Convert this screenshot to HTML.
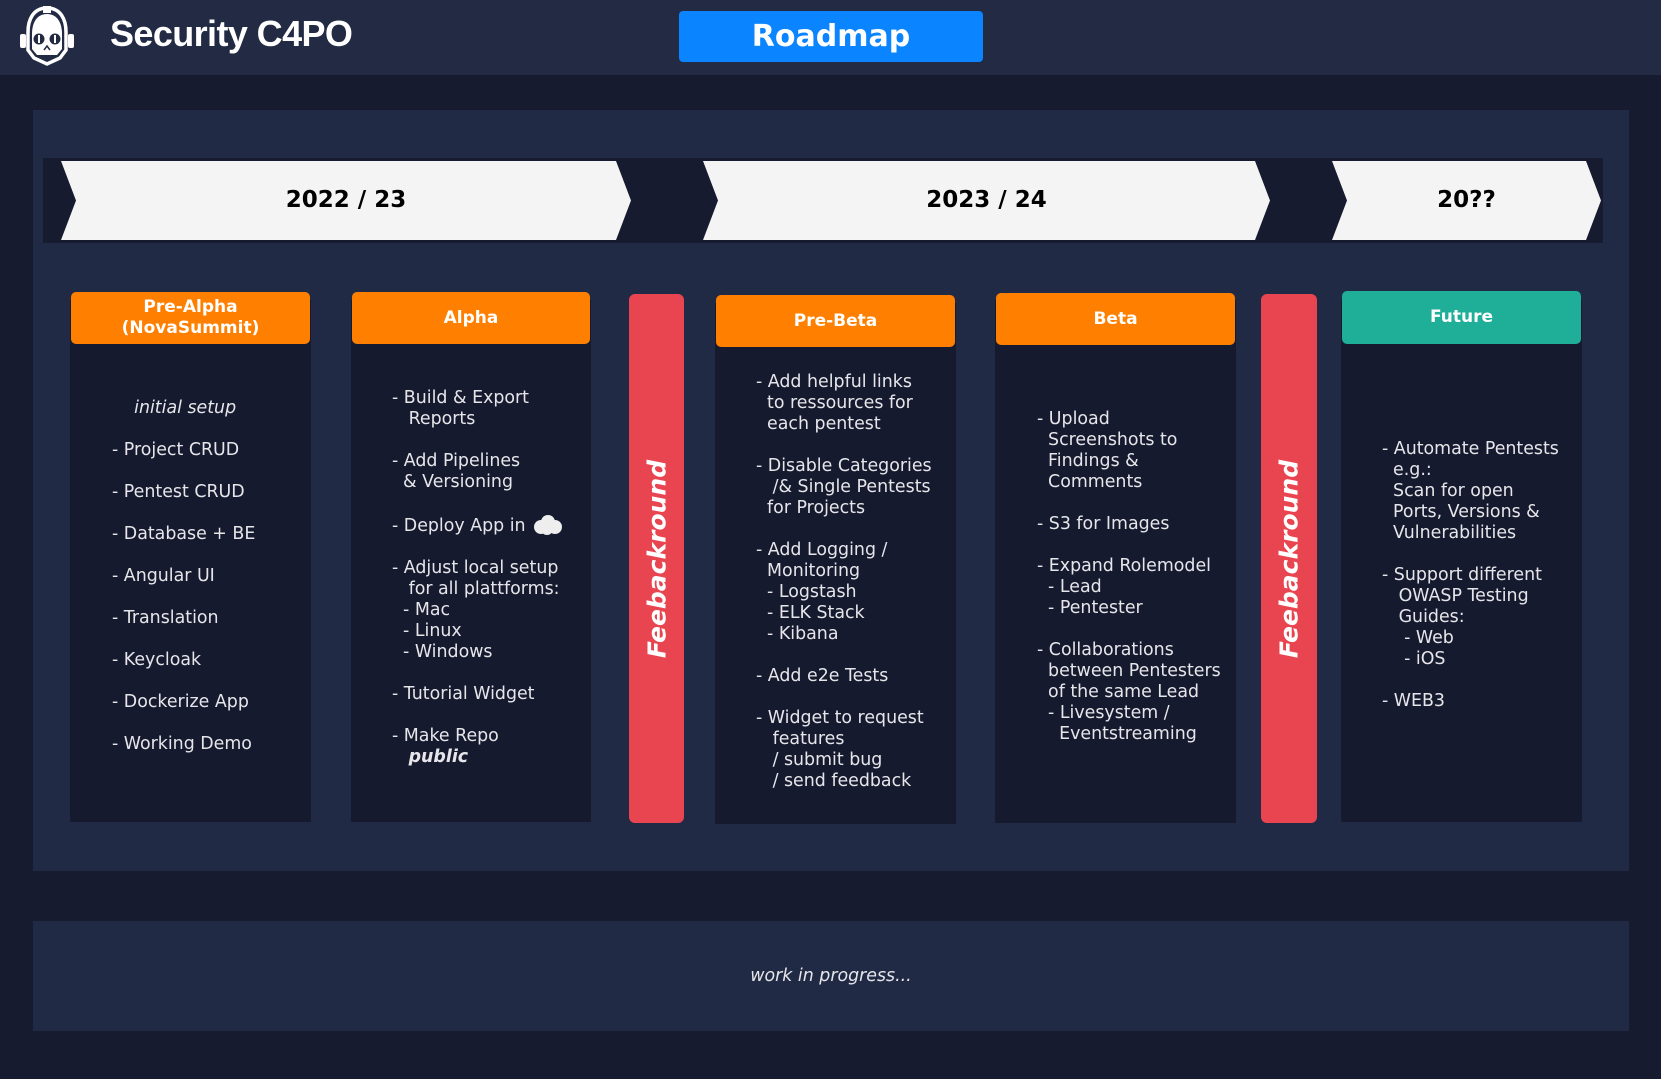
<!DOCTYPE html>
<html><head><meta charset="utf-8"><style>
*{margin:0;padding:0;box-sizing:border-box}
body{width:1661px;height:1079px;background:#161b2f;position:relative;overflow:hidden;font-family:"DejaVu Sans","Liberation Sans",sans-serif;color:#e6e6ea}
.abs{position:absolute}
.hdr{left:0;top:0;width:1661px;height:75px;background:#222a44}
.title{left:110px;top:13px;font:bold 36px "Liberation Sans",sans-serif;letter-spacing:-0.6px;color:#fff}
.btn{left:679px;top:11px;width:304px;height:51px;background:#0a84ff;border-radius:4px;color:#fff;font:bold 30px "DejaVu Sans",sans-serif;text-align:center;line-height:51px}
.panel{background:#212a45}
.band{left:43px;top:158px;width:1560px;height:85px;background:#161b2f}
.arrow{background:#f4f4f4;top:161px;height:79px;color:#000;font-weight:bold;font-size:23px;text-align:center;line-height:79px}
.col{background:#161a2f}
.head{color:#fff;font-weight:bold;font-size:17px;text-align:center;border-radius:5px;display:flex;align-items:center;justify-content:center;line-height:21px}
.fb{background:#e84551;border-radius:6px}
.fbt{position:absolute;left:50%;top:50%;transform:translate(-50%,-50%) rotate(-90deg);color:#fff;font-weight:bold;font-style:italic;font-size:25px;white-space:nowrap}
pre{position:absolute;font-family:"DejaVu Sans",sans-serif;font-size:17.4px;line-height:21px;color:#e6e6ea}
</style></head><body>
<div class="abs hdr"></div>
<svg class="abs" style="left:16px;top:6px" width="62" height="62" viewBox="-8 0 62 62">
<path d="M23 2 C9 2 4 14 4 26 L4 44 L10 52 L23 58 L36 52 L42 44 L42 26 C42 14 37 2 23 2Z" fill="none" stroke="#fff" stroke-width="3.5"/>
<path d="M23 8 C12 8 8 18 8 28 L8 43 L13 49 L33 49 L38 43 L38 28 C38 18 34 8 23 8Z" fill="#fff"/>
<rect x="19" y="0" width="8" height="7" fill="#fff"/>
<circle cx="15" cy="33" r="5.5" fill="#222a44"/><circle cx="31" cy="33" r="5.5" fill="#222a44"/>
<rect x="14" y="29" width="2" height="8" fill="#fff"/><rect x="30" y="29" width="2" height="8" fill="#fff"/>
<path d="M20 44 L23 40 L26 44" stroke="#222a44" stroke-width="1.5" fill="none"/>
<rect x="-4" y="28" width="6" height="14" rx="2" fill="#fff"/><rect x="44" y="28" width="6" height="14" rx="2" fill="#fff"/>
</svg>
<div class="abs title">Security C4PO</div>
<div class="abs btn">Roadmap</div>

<div class="abs panel" style="left:33px;top:110px;width:1596px;height:761px"></div>
<div class="abs band"></div>
<div class="abs arrow" style="left:61px;width:570px;clip-path:polygon(0 0,555px 0,570px 50%,555px 100%,0 100%,15px 50%)">2022 / 23</div>
<div class="abs arrow" style="left:703px;width:567px;clip-path:polygon(0 0,552px 0,567px 50%,552px 100%,0 100%,15px 50%)">2023 / 24</div>
<div class="abs arrow" style="left:1332px;width:269px;clip-path:polygon(0 0,254px 0,269px 50%,254px 100%,0 100%,15px 50%)">20??</div>

<div class="abs col" style="left:70px;top:300px;width:241px;height:522px"></div>
<div class="abs head" style="left:71px;top:292px;width:239px;height:52px;background:#ff8000">Pre-Alpha<br>(NovaSummit)</div>
<div class="abs col" style="left:351px;top:300px;width:240px;height:522px"></div>
<div class="abs head" style="left:352px;top:292px;width:238px;height:52px;background:#ff8000">Alpha</div>
<div class="abs fb" style="left:629px;top:294px;width:55px;height:529px"><div class="fbt">Feebackround</div></div>
<div class="abs col" style="left:715px;top:303px;width:241px;height:521px"></div>
<div class="abs head" style="left:716px;top:295px;width:239px;height:52px;background:#ff8000">Pre-Beta</div>
<div class="abs col" style="left:995px;top:300px;width:241px;height:523px"></div>
<div class="abs head" style="left:996px;top:293px;width:239px;height:52px;background:#ff8000">Beta</div>
<div class="abs fb" style="left:1261px;top:294px;width:56px;height:529px"><div class="fbt">Feebackround</div></div>
<div class="abs col" style="left:1341px;top:300px;width:241px;height:522px"></div>
<div class="abs head" style="left:1342px;top:291px;width:239px;height:53px;background:#1fae98">Future</div>

<pre style="left:112px;top:398px">    <i>initial setup</i>

- Project CRUD

- Pentest CRUD

- Database + BE

- Angular UI

- Translation

- Keycloak

- Dockerize App

- Working Demo</pre>

<pre style="left:392px;top:388px">- Build &amp; Export
   Reports

- Add Pipelines
  &amp; Versioning

- Deploy App in <svg width="32" height="22" viewBox="0 0 32 22" style="vertical-align:-5px"><g fill="#eee"><circle cx="10" cy="13" r="7"/><circle cx="17" cy="8" r="7"/><circle cx="24" cy="13" r="7"/><circle cx="16" cy="15" r="6"/></g></svg>

- Adjust local setup
   for all plattforms:
  - Mac
  - Linux
  - Windows

- Tutorial Widget

- Make Repo
   <b><i>public</i></b></pre>

<pre style="left:756px;top:372px">- Add helpful links
  to ressources for
  each pentest

- Disable Categories
   /&amp; Single Pentests
  for Projects

- Add Logging /
  Monitoring
  - Logstash
  - ELK Stack
  - Kibana

- Add e2e Tests

- Widget to request
   features
   / submit bug
   / send feedback</pre>

<pre style="left:1037px;top:409px">- Upload
  Screenshots to
  Findings &amp;
  Comments

- S3 for Images

- Expand Rolemodel
  - Lead
  - Pentester

- Collaborations
  between Pentesters
  of the same Lead
  - Livesystem /
    Eventstreaming</pre>

<pre style="left:1382px;top:439px">- Automate Pentests
  e.g.:
  Scan for open
  Ports, Versions &amp;
  Vulnerabilities

- Support different
   OWASP Testing
   Guides:
    - Web
    - iOS

- WEB3</pre>

<div class="abs panel" style="left:33px;top:921px;width:1596px;height:110px"></div>
<div class="abs" style="left:33px;top:964px;width:1596px;text-align:center;font-style:italic;font-size:17.4px;line-height:24px">work in progress...</div>
</body></html>
